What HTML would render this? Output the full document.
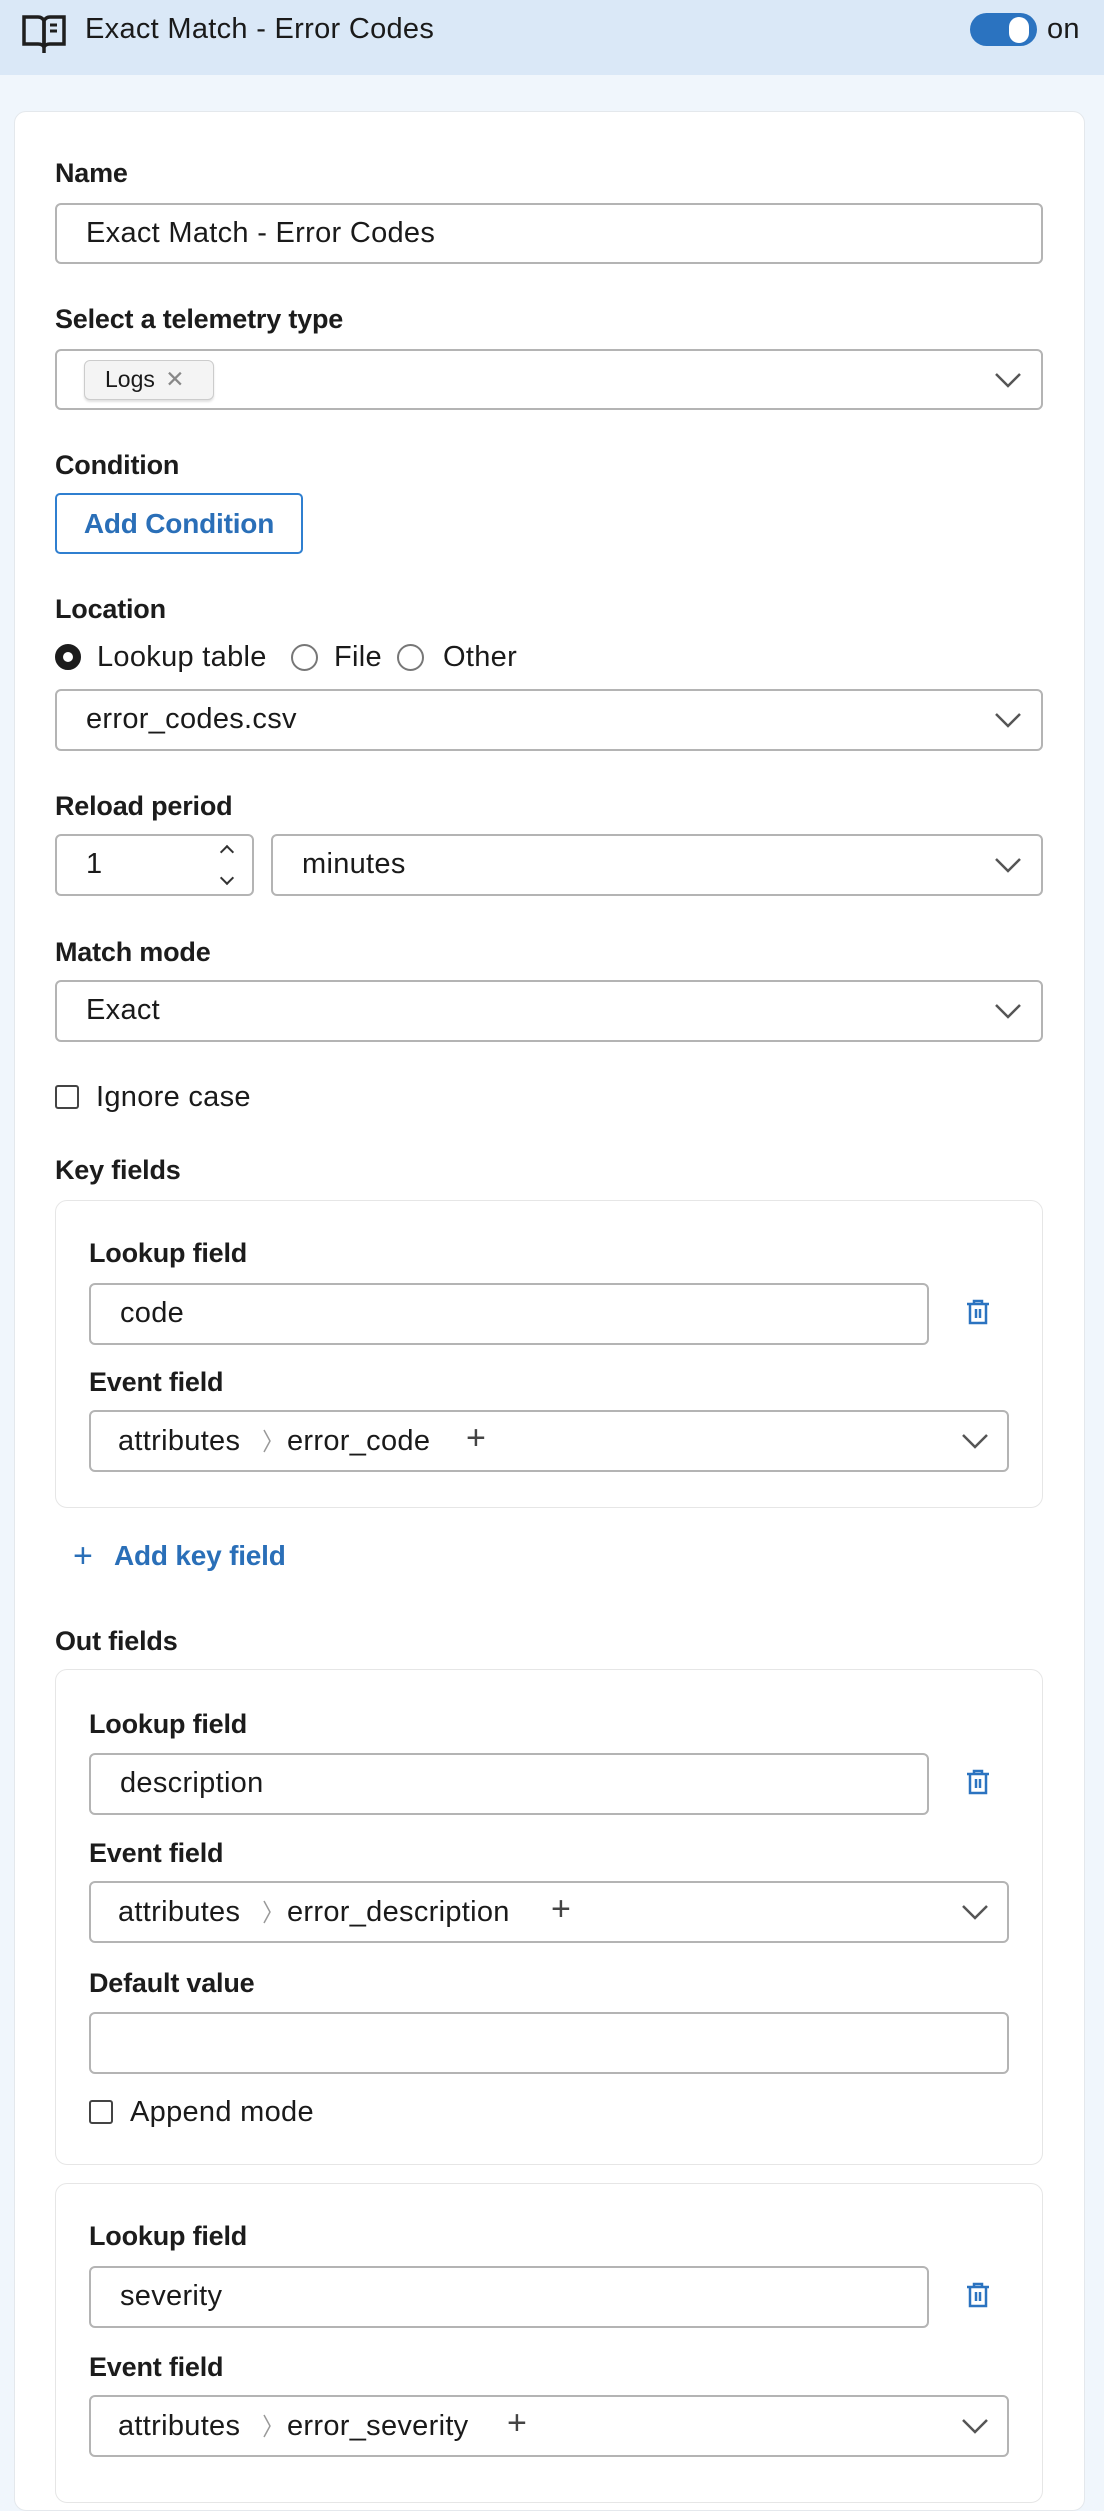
<!DOCTYPE html>
<html><head><meta charset="utf-8"><style>
*{box-sizing:border-box;margin:0;padding:0}
body{width:1104px;height:2464px;overflow:hidden;background:#f0f6fc;font-family:"Liberation Sans",sans-serif;color:#1a1a1a;position:relative}
.a{position:absolute}
.hdr{left:0;top:0;width:1104px;height:75px;background:#dae8f7}
.card{left:14px;top:111px;width:1071px;height:2400px;background:#fff;border:1px solid #e4e8ec;border-radius:12px}
.lbl{position:absolute;font-size:27px;font-weight:bold;color:#1c1c1c;line-height:30px;letter-spacing:-0.2px}
.in{position:absolute;border:2px solid #b4b4b4;border-radius:6px;background:#fff;font-size:29px;line-height:57px;padding-left:29px;color:#1a1a1a;white-space:nowrap;letter-spacing:0.3px}
.t{position:absolute;font-size:29px;line-height:34px;white-space:nowrap;letter-spacing:0.3px}
.chev{position:absolute;width:28px;height:16px}
.box{position:absolute;border:1.5px solid #e6e6e6;border-radius:12px;background:#fff}
.trash{position:absolute;width:24px;height:26px}
</style></head><body>
<div class="a hdr"></div>
<svg class="a" style="left:21px;top:13px" width="46" height="42" viewBox="0 0 46 42" fill="none" stroke="#1e1e1e" stroke-width="3.5">
<path d="M3 4h14c3 0 6 2 6 5v25c-1-2-3-3-6-3H3z"/><path d="M43 4H29c-3 0-6 2-6 5v25c1-2 3-3 6-3h14z"/><path d="M23 34v6" /><path d="M29 12h7M29 18h7" stroke-width="3"/></svg>
<div class="t" style="left:85px;top:12px">Exact Match - Error Codes</div>
<div class="a" style="left:970px;top:13px;width:67px;height:33px;border-radius:17px;background:#2b73c0"></div>
<div class="a" style="left:1009px;top:17px;width:20px;height:26px;border-radius:10px;background:#fff"></div>
<div class="t" style="left:1047px;top:12px">on</div>

<div class="a card"></div>

<div class="lbl" style="left:55px;top:158px">Name</div>
<div class="in" style="left:55px;top:203px;width:988px;height:61px">Exact Match - Error Codes</div>

<div class="lbl" style="left:55px;top:304px">Select a telemetry type</div>
<div class="in" style="left:55px;top:349px;width:988px;height:61px"></div>
<div class="a" style="left:84px;top:360px;width:130px;height:40px;border:1.5px solid #ccc;border-radius:6px;background:#f4f4f4;box-shadow:0 2px 2px rgba(0,0,0,.12);font-size:23px;line-height:37px;padding-left:20px">Logs <span style="color:#888;margin-left:4px">✕</span></div>
<svg class="chev" style="left:994px;top:372px" viewBox="0 0 28 16"><path d="M2 2l12 12 12-12" fill="none" stroke="#555" stroke-width="2.5"/></svg>

<div class="lbl" style="left:55px;top:450px">Condition</div>
<div class="a" style="left:55px;top:493px;width:248px;height:61px;border:2px solid #2f7fd0;border-radius:5px;color:#2a6fb8;font-size:28px;line-height:57px;text-align:center;font-weight:bold;letter-spacing:-0.2px">Add Condition</div>

<div class="lbl" style="left:55px;top:594px">Location</div>
<div class="a" style="left:55px;top:644px;width:26px;height:26px;border-radius:50%;border:8px solid #1c1c1c"></div>
<div class="t" style="left:97px;top:640px">Lookup table</div>
<div class="a" style="left:291px;top:644px;width:27px;height:27px;border-radius:50%;border:2px solid #777"></div>
<div class="t" style="left:334px;top:640px">File</div>
<div class="a" style="left:397px;top:644px;width:27px;height:27px;border-radius:50%;border:2px solid #777"></div>
<div class="t" style="left:443px;top:640px">Other</div>
<div class="in" style="left:55px;top:689px;width:988px;height:62px">error_codes.csv</div>
<svg class="chev" style="left:994px;top:712px" viewBox="0 0 28 16"><path d="M2 2l12 12 12-12" fill="none" stroke="#555" stroke-width="2.5"/></svg>

<div class="lbl" style="left:55px;top:791px">Reload period</div>
<div class="in" style="left:55px;top:834px;width:199px;height:62px">1</div>
<div class="a" style="left:222px;top:847px;width:10px;height:10px;border-left:2px solid #333;border-top:2px solid #333;transform:rotate(45deg)"></div>
<div class="a" style="left:222px;top:873px;width:10px;height:10px;border-right:2px solid #333;border-bottom:2px solid #333;transform:rotate(45deg)"></div>
<div class="in" style="left:271px;top:834px;width:772px;height:62px">minutes</div>
<svg class="chev" style="left:994px;top:857px" viewBox="0 0 28 16"><path d="M2 2l12 12 12-12" fill="none" stroke="#555" stroke-width="2.5"/></svg>

<div class="lbl" style="left:55px;top:937px">Match mode</div>
<div class="in" style="left:55px;top:980px;width:988px;height:62px">Exact</div>
<svg class="chev" style="left:994px;top:1003px" viewBox="0 0 28 16"><path d="M2 2l12 12 12-12" fill="none" stroke="#555" stroke-width="2.5"/></svg>

<div class="a" style="left:55px;top:1085px;width:24px;height:24px;border:2px solid #444;border-radius:3px"></div>
<div class="t" style="left:96px;top:1080px">Ignore case</div>

<div class="lbl" style="left:55px;top:1155px">Key fields</div>
<div class="box" style="left:55px;top:1200px;width:988px;height:308px"></div>
<div class="lbl" style="left:89px;top:1238px">Lookup field</div>
<div class="in" style="left:89px;top:1283px;width:840px;height:62px">code</div>
<svg class="trash" style="left:966px;top:1299px" viewBox="0 0 24 26" fill="none" stroke="#2b73c0" stroke-width="2.5"><path d="M1 5h22M8 5V2h8v3M4 5v19h16V5M10 10v9M14 10v9"/></svg>
<div class="lbl" style="left:89px;top:1367px">Event field</div>
<div class="in" style="left:89px;top:1410px;width:920px;height:62px"></div>
<div class="t" style="left:118px;top:1424px">attributes</div>
<svg class="a" style="left:262px;top:1428px" width="10" height="26" viewBox="0 0 10 26"><path d="M2 2l6 11-6 11" fill="none" stroke="#999" stroke-width="1.5"/></svg>
<div class="t" style="left:287px;top:1424px">error_code</div>
<div class="t" style="left:466px;top:1421px;font-size:34px;color:#444">+</div>
<svg class="chev" style="left:961px;top:1433px" viewBox="0 0 28 16"><path d="M2 2l12 12 12-12" fill="none" stroke="#555" stroke-width="2.5"/></svg>
<div class="a" style="left:73px;top:1536px;font-size:34px;line-height:40px;color:#2a6fb8">+</div>
<div class="a" style="left:114px;top:1539px;font-size:28px;line-height:34px;color:#2a6fb8;font-weight:bold;letter-spacing:-0.2px">Add key field</div>

<div class="lbl" style="left:55px;top:1626px">Out fields</div>
<div class="box" style="left:55px;top:1669px;width:988px;height:496px"></div>
<div class="lbl" style="left:89px;top:1709px">Lookup field</div>
<div class="in" style="left:89px;top:1753px;width:840px;height:62px">description</div>
<svg class="trash" style="left:966px;top:1769px" viewBox="0 0 24 26" fill="none" stroke="#2b73c0" stroke-width="2.5"><path d="M1 5h22M8 5V2h8v3M4 5v19h16V5M10 10v9M14 10v9"/></svg>
<div class="lbl" style="left:89px;top:1838px">Event field</div>
<div class="in" style="left:89px;top:1881px;width:920px;height:62px"></div>
<div class="t" style="left:118px;top:1895px">attributes</div>
<svg class="a" style="left:262px;top:1899px" width="10" height="26" viewBox="0 0 10 26"><path d="M2 2l6 11-6 11" fill="none" stroke="#999" stroke-width="1.5"/></svg>
<div class="t" style="left:287px;top:1895px">error_description</div>
<div class="t" style="left:551px;top:1892px;font-size:34px;color:#444">+</div>
<svg class="chev" style="left:961px;top:1904px" viewBox="0 0 28 16"><path d="M2 2l12 12 12-12" fill="none" stroke="#555" stroke-width="2.5"/></svg>
<div class="lbl" style="left:89px;top:1968px">Default value</div>
<div class="in" style="left:89px;top:2012px;width:920px;height:62px"></div>
<div class="a" style="left:89px;top:2100px;width:24px;height:24px;border:2px solid #444;border-radius:3px"></div>
<div class="t" style="left:130px;top:2095px">Append mode</div>

<div class="box" style="left:55px;top:2183px;width:988px;height:320px"></div>
<div class="lbl" style="left:89px;top:2221px">Lookup field</div>
<div class="in" style="left:89px;top:2266px;width:840px;height:62px">severity</div>
<svg class="trash" style="left:966px;top:2282px" viewBox="0 0 24 26" fill="none" stroke="#2b73c0" stroke-width="2.5"><path d="M1 5h22M8 5V2h8v3M4 5v19h16V5M10 10v9M14 10v9"/></svg>
<div class="lbl" style="left:89px;top:2352px">Event field</div>
<div class="in" style="left:89px;top:2395px;width:920px;height:62px"></div>
<div class="t" style="left:118px;top:2409px">attributes</div>
<svg class="a" style="left:262px;top:2413px" width="10" height="26" viewBox="0 0 10 26"><path d="M2 2l6 11-6 11" fill="none" stroke="#999" stroke-width="1.5"/></svg>
<div class="t" style="left:287px;top:2409px">error_severity</div>
<div class="t" style="left:507px;top:2406px;font-size:34px;color:#444">+</div>
<svg class="chev" style="left:961px;top:2418px" viewBox="0 0 28 16"><path d="M2 2l12 12 12-12" fill="none" stroke="#555" stroke-width="2.5"/></svg>
</body></html>
